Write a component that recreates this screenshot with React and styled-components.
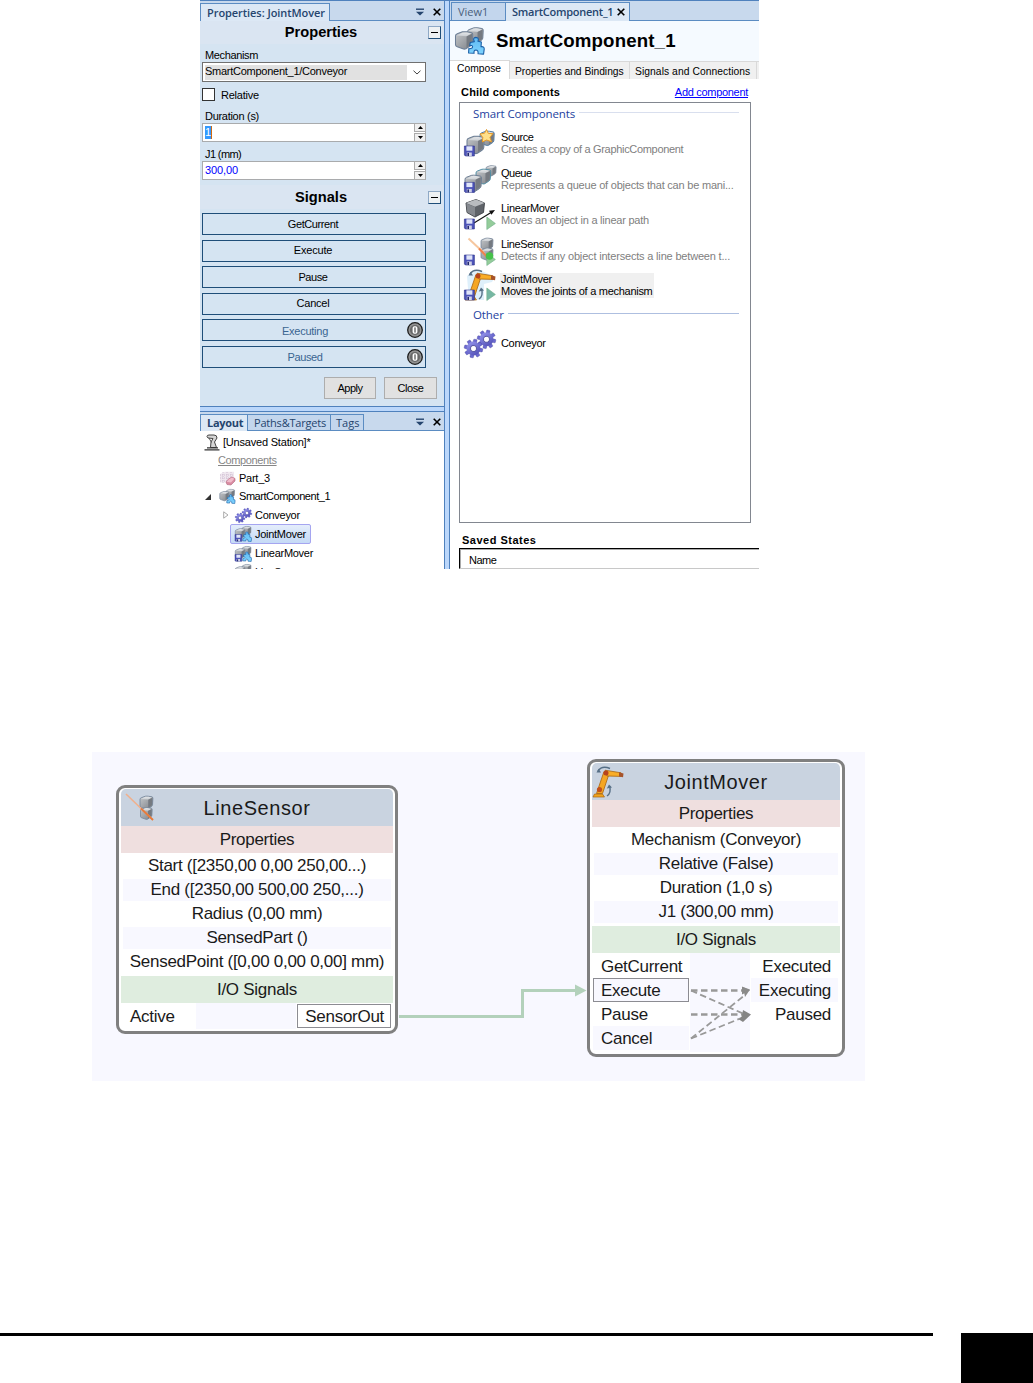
import React from "react";
import styled, { createGlobalStyle, css } from "styled-components";

const Global = createGlobalStyle`
  *, *::before, *::after { box-sizing: border-box; }
  body { margin: 0; background: #fff; }
`;

const ui = `"Liberation Sans", Arial, sans-serif`;
const segoe = `"Open Sans", "Noto Sans", sans-serif`;

const Page = styled.main`
  width: 1033px;
  height: 1383px;
  overflow: hidden;
  display: flex;
  flex-direction: column;
  background: #fff;
  font-family: ${ui};
  color: #000;
`;

const Label = styled.span`
  font-family: ${(p) => (p.$segoe ? segoe : ui)};
  font-size: ${(p) => p.$size || 11}px;
  font-weight: ${(p) => p.$weight || 400};
  letter-spacing: ${(p) => (p.$ls === undefined ? -0.3 : p.$ls)}px;
  color: ${(p) => p.$color || "#000"};
  text-decoration: ${(p) => (p.$underline ? "underline" : "none")};
  white-space: pre;
  line-height: 13px;
  display: block;
`;

/* ---------- application window ---------- */

const AppWindow = styled.section`
  width: 559px;
  height: 569px;
  margin-left: 200px;
  flex: none;
  display: flex;
  overflow: hidden;
  border-top: 1px solid #4f81bd;
  background: #bbd7fb;
`;

const LeftColumn = styled.div`
  width: 245px;
  flex: none;
  display: flex;
  flex-direction: column;
  gap: 4px;
  border-right: 1px solid #4f81bd;
`;

const Pane = styled.div`
  height: ${(p) => p.$height}px;
  flex: none;
  overflow: hidden;
  display: flex;
  flex-direction: column;
  background: ${(p) => p.$bg};
  ${(p) => p.$top && css`border-top: 1px solid #4f81bd;`}
  ${(p) => p.$bottom && css`border-bottom: 1px solid #4f81bd;`}
`;

const TabBar = styled.div`
  height: ${(p) => p.$height}px;
  flex: none;
  display: flex;
  padding-top: ${(p) => p.$pad}px;
  padding-left: ${(p) => p.$left || 0}px;
  background: #c8d9ed;
  border-bottom: 1px solid #5b8cc2;
`;

const DockTab = styled.div`
  width: ${(p) => p.$width}px;
  flex: none;
  display: flex;
  align-items: center;
  gap: 4px;
  padding-left: ${(p) => p.$pad}px;
  border: 1px solid #5b8cc2;
  border-bottom: 0;
  margin-left: ${(p) => (p.$first ? 0 : -1)}px;
  background: ${(p) => (p.$active ? "#dce8f5" : "#c3d6ed")};
  ${(p) => p.$active && css`margin-bottom: -1px; padding-bottom: 1px;`}
`;

const BarTools = styled.div`
  margin-left: auto;
  display: flex;
  align-items: center;
  gap: 9px;
  padding-right: 3px;
`;

const SectionHead = styled.div`
  height: ${(p) => p.$height}px;
  flex: none;
  display: grid;
  grid-template-columns: 228px 13px;
  align-items: center;
  background: #dae5f2;
  & > span { text-align: center; padding-left: 14px; }
`;

const MinusBox = styled.button`
  width: 13px;
  height: 13px;
  padding: 0;
  display: grid;
  place-items: center;
  border: 1px solid #1f4e79;
  border-left-color: #8fa9c6;
  border-top-color: #8fa9c6;
  background: #eef1f3;
  &::after { content: ""; width: 7px; height: 1px; background: #000; }
`;

const Form = styled.div`
  height: ${(p) => p.$height}px;
  flex: none;
  display: flex;
  flex-direction: column;
  padding-left: 2px;
`;

const FieldLabel = styled.div`
  height: ${(p) => p.$height}px;
  flex: none;
  display: flex;
  align-items: flex-end;
  padding: 0 0 ${(p) => p.$pad || 0}px 3px;
`;

const Combo = styled.div`
  width: 224px;
  height: 20px;
  flex: none;
  display: flex;
  align-items: center;
  justify-content: space-between;
  padding: 2px 4px 2px 2px;
  border: 1px solid #707070;
  background: #fff;
`;

const ComboValue = styled.div`
  width: 202px;
  height: 15px;
  background: #e1e1e1;
`;

const CheckRow = styled.div`
  display: flex;
  align-items: center;
  gap: 6px;
  margin-top: 6px;
  height: 13px;
  flex: none;
  & > span { padding-top: 1px; }
`;

const CheckBox = styled.div`
  width: 13px;
  height: 13px;
  background: #fff;
  border: 1px solid #333;
`;

const NumberBox = styled.div`
  width: 224px;
  height: 19px;
  flex: none;
  display: flex;
  align-items: center;
  justify-content: space-between;
  padding-left: 2px;
  border: 1px solid #a9abad;
  background: #fff;
`;

const Selected = styled.div`
  height: 13px;
  width: 7px;
  display: flex;
  background: #3399ff;
  border-right: 1px solid #d06a10;
`;

const Spinner = styled.div`
  width: 12px;
  height: 19px;
  margin: -1px -1px -1px 0;
  display: grid;
  grid-template-rows: 9px 9px;
  gap: 1px;
`;

const SpinBtn = styled.div`
  border: 1px solid #acacac;
  background: #f0f0f0;
  display: grid;
  place-items: center;
`;

const SignalList = styled.div`
  display: grid;
  grid-template-rows: 22px 22px 22px 22px 22px 22px;
  row-gap: 4.6px;
  width: 226px;
  margin-top: 4px;
  padding-left: 2px;
  height: 160px;
  flex: none;
`;

const SignalButton = styled.div`
  display: grid;
  grid-template-columns: 1fr ${(p) => (p.$lamp ? "18px" : "0px")};
  align-items: center;
  border: 1px solid #1f4e79;
  background: #d5e4f2;
  & > span {
    text-align: center;
    padding-right: ${(p) => (p.$lamp ? 0 : 2)}px;
    padding-top: ${(p) => (p.$lamp ? 2 : 0)}px;
  }
`;

const Actions = styled.div`
  display: flex;
  justify-content: flex-end;
  gap: 8px;
  padding: 4px 7px 0 0;
`;

const PushButton = styled.button`
  width: ${(p) => p.$width}px;
  height: 22px;
  padding: 0;
  display: grid;
  place-items: center;
  border: 1px solid #adadad;
  background: #e1e1e1;
`;

const Tree = styled.div`
  display: flex;
  flex-direction: column;
  flex: 1;
  background: #fff;
`;

const TreeRow = styled.div`
  height: ${(p) => p.$height}px;
  flex: none;
  display: flex;
  align-items: center;
  padding-left: ${(p) => p.$indent}px;
  padding-top: ${(p) => p.$drop || 0}px;
  gap: 3px;
`;

const TreeItem = styled.div`
  height: 20px;
  display: flex;
  align-items: center;
  gap: 3px;
  padding: 0 4px 0 4px;
  border: 1px solid ${(p) => (p.$active ? "#a5a5f0" : "transparent")};
  border-radius: 2px;
  background: ${(p) => (p.$active ? "linear-gradient(#e4edfb, #c5daf6)" : "none")};
`;

/* ---------- editor (right side) ---------- */

const Editor = styled.div`
  flex: 1;
  min-width: 0;
  margin-left: 4px;
  display: flex;
  flex-direction: column;
  border-left: 1px solid #4f81bd;
  background: #fff;
`;

const TitleBar = styled.div`
  height: 39px;
  flex: none;
  display: flex;
  align-items: center;
  gap: 11px;
  padding-left: 5px;
  background: #f5faff;
`;

const InnerTabs = styled.div`
  height: 19px;
  flex: none;
  display: flex;
  align-items: flex-end;
  background: #f5faff;
`;

const InnerTab = styled.div`
  width: ${(p) => p.$width}px;
  height: ${(p) => (p.$active ? 19 : 18)}px;
  flex: none;
  display: flex;
  align-items: center;
  padding: ${(p) => (p.$active ? "0 0 3px 7px" : "1px 0 0 5px")};
  border: 1px solid #d9d9d9;
  border-left: 0;
  border-bottom: 0;
  background: ${(p) => (p.$active ? "#fff" : "#f0f0f0")};
`;

const ListHead = styled.div`
  height: 23px;
  flex: none;
  display: flex;
  justify-content: space-between;
  align-items: center;
  padding: 3px 11px 0 11px;
`;

const ChildList = styled.div`
  width: 292px;
  height: 421px;
  flex: none;
  margin-left: 9px;
  padding-top: 3px;
  border: 1px solid #828790;
  background: #fff;
`;

const Items = styled.div`
  padding: 5.6px 0 3px;
`;

const GroupHead = styled.div`
  display: flex;
  align-items: center;
  height: ${(p) => p.$height}px;
  margin: 0 11px 0 13px;
  gap: 4px;
  &::after { content: ""; flex: 1; height: 1px; margin-bottom: 1px; background: ${(p) => p.$line}; }
`;

const ListItem = styled.div`
  display: flex;
  align-items: center;
  height: ${(p) => p.$height || 35.5}px;
  padding-left: 4px;
  gap: 4px;
`;

const ItemText = styled.div`
  padding: 0 1px 0 1px;
  display: flex;
  flex-direction: column;
  background: ${(p) => (p.$active ? "#f0f0f0" : "none")};
  & > span { line-height: 12.3px; }
`;

const SavedTitle = styled.div`
  height: 25px;
  flex: none;
  padding: 11px 0 0 12px;
`;

const SavedTable = styled.div`
  margin-left: 9px;
  height: 21px;
  flex: none;
  padding: 5px 0 0 9px;
  border-top: 1.5px solid #000;
  border-left: 1.5px solid #000;
  border-bottom: 1px solid #c8c8c8;
  box-shadow: inset 1px 1px 0 #aaa;
`;

/* ---------- design view ---------- */

const Canvas = styled.section`
  position: relative;
  width: 773px;
  height: 329px;
  margin: 183px 0 0 92px;
  flex: none;
  background: #f8f8ff;
`;

const Wire = styled.svg`
  position: absolute;
  left: 0;
  top: 0;
`;

const Node = styled.article`
  position: absolute;
  left: ${(p) => p.$x}px;
  top: ${(p) => p.$y}px;
  width: ${(p) => p.$w}px;
  height: ${(p) => p.$h}px;
  border: 3px solid #808080;
  border-radius: 9px;
  padding: 1px 2px 2px;
  background: #fff;
  display: flex;
  flex-direction: column;
`;

const NodeHead = styled.header`
  height: 37px;
  flex: none;
  display: grid;
  grid-template-columns: 32px 1fr 32px;
  align-items: center;
  border-radius: 5px 5px 0 0;
  background: #c9d3e0;
  & > span { text-align: center; line-height: 24px; padding-top: 1px; }
`;

const NodeSection = styled.div`
  height: 27px;
  flex: none;
  display: grid;
  place-items: center;
  background: ${(p) => p.$bg};
`;

const NodeRows = styled.div`
  display: grid;
  grid-auto-rows: 24px;
  padding: 1px 2px 2px;
  & > div:nth-child(even) { background: #f8f8ff; background-clip: content-box; }
`;

const NodeRow = styled.div`
  display: grid;
  place-items: center;
  padding: 1px 0;
`;

const NodeText = styled(Label)`
  font-size: 17px;
  letter-spacing: -0.28px;
  line-height: 22px;
  color: #1a1a1a;
`;

const NodeTitle = styled(Label)`
  font-size: 20px;
  letter-spacing: 0.57px;
  color: #1a1a1a;
`;

const Ports = styled.div`
  flex: 1;
  display: grid;
  grid-template-columns: ${(p) => p.$cols};
`;

const PortColumn = styled.div`
  display: grid;
  grid-auto-rows: 24px;
  align-content: start;
  padding: 1px ${(p) => (p.$right ? 2 : 1)}px 0 1px;
  justify-items: stretch;
  background: #fff;
`;

const Port = styled.div`
  display: flex;
  justify-content: ${(p) => (p.$right ? "flex-end" : "flex-start")};
  align-items: center;
  padding: 1px ${(p) => (p.$right ? 6 : 0)}px 0 ${(p) => (p.$right ? 0 : 7)}px;
  border: 1px solid ${(p) => (p.$boxed ? "#8c8c92" : "transparent")};
  background: ${(p) => (p.$alt ? "#f8f8ff" : "#fff")};
`;

const PortMiddle = styled.div`
  background: #f8f8ff;
`;

/* ---------- page footer ---------- */

const Footer = styled.footer`
  margin-top: 252px;
  height: 50px;
  flex: none;
  display: flex;
  justify-content: space-between;
`;

const Rule = styled.div`
  width: 933px;
  height: 3px;
  background: #000;
`;

const PageBlock = styled.div`
  width: 72px;
  height: 50px;
  background: #000;
`;

/* ---------- icons ---------- */

const Icon = styled.svg`
  display: block;
  flex: none;
  overflow: visible;
`;

const Defs = styled.svg`
  position: absolute;
`;

const SensorMark = styled.div`
  padding-left: 4px;
`;

const Gradients = () => (
  <Defs width="0" height="0">
    <defs>
      <linearGradient id="steel" x1="0" y1="0" x2="1" y2="1">
        <stop offset="0" stopColor="#c4c7ca" />
        <stop offset="1" stopColor="#7d8187" />
      </linearGradient>
      <linearGradient id="steelTop" x1="0" y1="0" x2="0" y2="1">
        <stop offset="0" stopColor="#e3e6e9" />
        <stop offset="1" stopColor="#c9cdd1" />
      </linearGradient>
      <linearGradient id="puzzle" x1="0" y1="0" x2="0" y2="1">
        <stop offset="0" stopColor="#5fb9f2" />
        <stop offset="1" stopColor="#7fd4ff" />
      </linearGradient>
      <linearGradient id="gear" x1="0" y1="0" x2="1" y2="1">
        <stop offset="0" stopColor="#9a9af0" />
        <stop offset="1" stopColor="#4a48b0" />
      </linearGradient>
      <radialGradient id="lamp">
        <stop offset="0" stopColor="#777" />
        <stop offset="1" stopColor="#999" />
      </radialGradient>
    </defs>
  </Defs>
);

const Block = ({ x, y, s = 1, edge = "#6d7f96" }) => (
  <g transform={`translate(${x} ${y}) scale(${s})`}>
    <path d="M0 4 Q0 2.5 1.5 2 L6 .3 Q8 0 10 .3 L14 1 Q15 1.3 15 2.6 L14.6 10 Q14.5 11.5 13 12.4 L9 15 Q8 15.5 7 15.2 L1.5 13.2 Q0 12.7 0 11.5Z" fill="url(#steel)" stroke={edge} strokeWidth=".9" />
    <path d="M.8 3.4 L6 1 Q8 .6 10 .9 L14 1.8 L9.6 4.2 Z" fill="url(#steelTop)" />
    <path d="M9.6 4.4 L14.4 2 L14 10.6 L9.6 14Z" fill="#757a81" />
  </g>
);

const Puzzle = ({ x, y, s = 1 }) => (
  <g transform={`translate(${x} ${y}) scale(${s})`}>
    <path d="M2.5 5 L6.2 4.2 Q4.4 .6 7.6 .3 Q10.8 .5 9.5 3.8 L12.6 4.6 L12.3 8.8 Q15.4 8.4 15.2 11 L14.6 15.6 L9.6 15.2 Q10 11.8 7.6 11.8 Q5.4 12 6 14.8 L1 14.6 L1.2 10.6 Q4.6 10.8 4.6 8.8 Q4.2 7.2 2 8Z" fill="url(#puzzle)" stroke="#1b5fa6" strokeWidth="1" strokeLinejoin="round" />
  </g>
);

const Disk = ({ x, y, s = 1 }) => (
  <g transform={`translate(${x} ${y}) scale(${s})`}>
    <path d="M0 0H10V10H1L0 9Z" fill="#4c53b8" stroke="#2a2f86" strokeWidth=".6" />
    <rect x="2" y=".3" width="6" height="4.4" fill="#dfe4f8" />
    <rect x="2.4" y="6.5" width="5" height="3.5" fill="#cfd2e6" />
    <rect x="3" y="7" width="1.6" height="3" fill="#23286f" />
  </g>
);

const Gear = ({ x, y, r }) => (
  <g transform={`translate(${x} ${y}) rotate(12)`}>
    {[0, 45, 90, 135].map((a) => (
      <rect key={a} x={-r * 0.19} y={-r} width={r * 0.38} height={r * 2} rx={r * 0.08} fill="#6b69d0" stroke="#37368c" strokeWidth=".3" transform={`rotate(${a})`} />
    ))}
    <circle r={r * 0.74} fill="url(#gear)" />
    <circle r={r * 0.33} fill="#fff" stroke="#37368c" strokeWidth=".7" />
  </g>
);

const Gears = ({ w = 32, h = 28 }) => (
  <Icon width={w} height={h} viewBox="0 0 32 28">
    <Gear x={22.5} y={9.3} r={9.3} />
    <Gear x={9.5} y={18.5} r={9.3} />
  </Icon>
);

const Robot = ({ x = 0, y = 0, s = 1 }) => (
  <g transform={`translate(${x} ${y}) scale(${s})`}>
    <path d="M6 5 Q10 -1 18 2.5" fill="none" stroke="#566f86" strokeWidth="1.4" />
    <path d="M9 6.5 L4.5 6.5 L6.6 2.8Z" fill="#566f86" />
    <path d="M1 31 L2.5 28 L10.5 28 L12.5 31Z" fill="#f2a51e" stroke="#a86410" strokeWidth=".7" />
    <path d="M4.5 27.5 L12 5.5 L17 8 L10.5 27.5Z" fill="#f5a623" stroke="#a86410" strokeWidth=".8" />
    <path d="M13 4.2 L29 6.8 L29 10.4 L15 10Z" fill="#f9ad27" stroke="#a86410" strokeWidth=".8" />
    <circle cx="14" cy="7" r="2.5" fill="#b8441c" />
    <circle cx="7.5" cy="23.5" r="2.6" fill="#c2501c" />
    <path d="M27 6.3 L31.5 7.5 L31 11.2 L27 10.6Z" fill="#a6532a" />
    <path d="M15 30 Q19.5 27 17.6 20" fill="none" stroke="#566f86" strokeWidth="1.4" />
    <path d="M14.8 22.5 L17 18.4 L20 21.6Z" fill="#566f86" />
  </g>
);

const Play = ({ color = "#94cc9a" }) => (
  <path d="M22.8 19 L31.4 25.5 L22.8 31.5Z" fill={color} stroke="#6fae88" strokeWidth=".6" />
);

const SmartIcon = ({ w, h, disk }) => (
  <Icon width={w} height={h} viewBox="0 0 30 28">
    <Block x={12.5} y={0.5} s={1.05} />
    <Block x={0.5} y={4.5} s={1.15} />
    <Puzzle x={12.5} y={10} s={1.1} />
    {disk && <Disk x={0} y={15} s={1.2} />}
  </Icon>
);

const SourceIcon = () => (
  <Icon width="32" height="28" viewBox="0 0 32 28">
    <Block x={16} y={2} s={0.95} edge="#3c6f9e" />
    <Block x={3} y={7} s={1.15} />
    <path d="M22.5 .5 L24.3 4.4 L28.8 4.6 L26 8.4 L27.5 12.8 L22.6 11 L18.4 13 L18.8 8.4 L16 5 L20.6 4.2Z" fill="#ffe08a" stroke="#e59a2b" strokeWidth="1" />
    <Disk x={0.4} y={17} />
  </Icon>
);

const QueueIcon = () => (
  <Icon width="32" height="28" viewBox="0 0 32 28">
    <Block x={22} y={0.5} s={0.68} />
    <Block x={12} y={4} s={0.98} edge="#438aa3" />
    <Block x={1} y={10} s={1.1} />
    <Disk x={0.4} y={17.4} />
  </Icon>
);

const LinearIcon = () => (
  <Icon width="32" height="32" viewBox="0 0 32 32">
    <path d="M2 5 L12 1.5 L20.5 5 L19.5 14.5 L11 19 L3 14.5Z" fill="#5f6369" stroke="#3c3f44" strokeWidth=".9" />
    <path d="M2 5 L12 1.5 L20.5 5 L11 8.8Z" fill="#b9bcc0" />
    <path d="M2.4 5.4 L11 9 V18.5 L3.3 14.3Z" fill="#85898f" />
    <path d="M10 25 L27 14.5" stroke="#111" strokeWidth="1.1" />
    <path d="M25 12.8 L31 12 L27.4 16.8Z" fill="#111" />
    <Disk x={0.4} y={21} />
    <Play />
  </Icon>
);

const SensorIcon = () => (
  <Icon width="32" height="32" viewBox="0 0 32 32">
    <Block x={17} y={4} s={0.8} />
    <Block x={17} y={14} s={0.8} />
    <path d="M4.5 4.5 L20 19" stroke="#f6c79f" strokeWidth="2" />
    <path d="M15 14.5 L25 25" stroke="#f0824a" strokeWidth="2" />
    <Play />
    <circle cx="25.5" cy="22" r="3.8" fill="#46c14a" />
    <Disk x={0.4} y={21} />
  </Icon>
);

const JointIcon = () => (
  <Icon width="32" height="32" viewBox="0 0 32 32">
    <path d="M3 7 Q10 0 18 2 L31 8 L28 13 L20 15 L20 31 H8 L4 20Z" fill="#dff0fb" />
    <Robot />
    <Disk x={0.4} y={21} />
    <Play color="#76b7a4" />
  </Icon>
);

const StationIcon = () => (
  <Icon width="16" height="17" viewBox="0 0 16 17">
    <path d="M3 2.5 Q3 1 5 1 H10 Q13 1 13 4 L10.5 8 L12.5 13.5 H6.5 L7 8 L9 4.5 L4 4Z" fill="#d5d5d5" stroke="#444" strokeWidth="1" />
    <path d="M5 4 L7.5 8.5" stroke="#555" strokeWidth="1" />
    <path d="M3 13.8H14 M.5 15.8H15.5" stroke="#333" strokeWidth="1.2" />
  </Icon>
);

const PartIcon = () => (
  <Icon width="17" height="15" viewBox="0 0 17 15">
    <path d="M1 3 L6 .8 H15 V8 L10 11.5 H1Z" fill="#efe7ef" />
    <path d="M1 4H15 M1 7H15 M1 10H12 M4 1V12 M8 1V12 M12 1V10" stroke="#c8b5cc" strokeWidth=".8" strokeDasharray="1 1" />
    <path d="M7 11 L9.5 8 L13 6 L16 7.5 V10 L12 14 L8 13.5Z" fill="#d98ba1" stroke="#b06880" strokeWidth=".6" />
    <path d="M7.5 10.8 L10 8.2 L13 6.6 L15.4 7.8 L12 11.4Z" fill="#f1bccb" />
  </Icon>
);

const SensorMini = () => (
  <Icon width="30" height="30" viewBox="0 0 30 30">
    <Block x={15} y={3} s={0.86} />
    <Block x={15.5} y={14.5} s={0.78} />
    <path d="M1 1 L28 27" stroke="#f0b08c" strokeWidth="1.6" />
    <path d="M16 15.5 L28 27" stroke="#e67b3c" strokeWidth="1.8" />
  </Icon>
);

const Pin = () => (
  <Icon width="8" height="8" viewBox="0 0 8 8">
    <path d="M0 1.2H8" stroke="#25456e" strokeWidth="1.4" />
    <path d="M0 3.8H8L4 7.6Z" fill="#25456e" />
  </Icon>
);

const Cross = () => (
  <Icon width="8" height="8" viewBox="0 0 8 8">
    <path d="M.7 .7L7.3 7.3M7.3 .7L.7 7.3" stroke="#000" strokeWidth="1.6" />
  </Icon>
);

const Lamp = () => (
  <Icon width="16" height="16" viewBox="0 0 16 16">
    <circle cx="8" cy="8" r="7.3" fill="url(#lamp)" stroke="#1c1c1c" strokeWidth="1.3" />
    <circle cx="8" cy="8" r="5" fill="#686868" />
    <rect x="5.6" y="4.2" width="4.8" height="7.6" rx="1.8" fill="#fff" />
    <rect x="7.3" y="5.4" width="1.4" height="5.2" fill="#666" />
  </Icon>
);

const Arrow = ({ down }) => (
  <Icon width="5" height="3" viewBox="0 0 5 3">
    <path d={down ? "M0 0H5L2.5 3Z" : "M0 3H5L2.5 0Z"} fill="#000" />
  </Icon>
);

const Spin = () => (
  <Spinner>
    <SpinBtn><Arrow /></SpinBtn>
    <SpinBtn><Arrow down /></SpinBtn>
  </Spinner>
);

const signals = [
  { name: "GetCurrent", ls: -0.4 },
  { name: "Execute", ls: -0.18 },
  { name: "Pause", ls: -0.4 },
  { name: "Cancel", ls: -0.2 },
  { name: "Executing", ls: -0.25, lamp: true },
  { name: "Paused", ls: -0.37, lamp: true },
];

const children = [
  { name: "Source", ls: -0.38, text: "Creates a copy of a GraphicComponent", tls: -0.32, icon: <SourceIcon /> },
  { name: "Queue", ls: -0.5, text: "Represents a queue of objects that can be mani...", tls: -0.21, icon: <QueueIcon /> },
  { name: "LinearMover", ls: -0.28, text: "Moves an object in a linear path", tls: -0.23, icon: <LinearIcon /> },
  { name: "LineSensor", ls: -0.36, text: "Detects if any object intersects a line between t...", tls: -0.18, icon: <SensorIcon /> },
  { name: "JointMover", ls: -0.28, text: "Moves the joints of a mechanism", tls: -0.28, icon: <JointIcon />, active: true },
];

const PropertiesPane = () => (
  <Pane $height={406} $bg="#d5e4f2" $bottom>
    <TabBar $height={20} $pad={2}>
      <DockTab $first $active $width={130} $pad={6}>
        <Label $segoe $weight={600} $ls={-0.06} $color="#25456e">Properties: JointMover</Label>
      </DockTab>
      <BarTools><Pin /><Cross /></BarTools>
    </TabBar>
    <SectionHead $height={23}>
      <Label $size={14.67} $weight={700} $ls={0}>Properties</Label>
      <MinusBox />
    </SectionHead>
    <Form $height={141}>
      <FieldLabel $height={18}><Label $ls={-0.36}>Mechanism</Label></FieldLabel>
      <Combo>
        <ComboValue><Label $ls={-0.26}>SmartComponent_1/Conveyor</Label></ComboValue>
        <Icon width="8" height="5" viewBox="0 0 8 5"><path d="M.5 .7L4 4L7.5 .7" fill="none" stroke="#444" /></Icon>
      </Combo>
      <CheckRow><CheckBox /><Label $ls={-0.22}>Relative</Label></CheckRow>
      <FieldLabel $height={22}><Label $ls={-0.29}>Duration (s)</Label></FieldLabel>
      <NumberBox>
        <Selected><Label $color="#fff">1</Label></Selected>
        <Spin />
      </NumberBox>
      <FieldLabel $height={19}><Label $ls={-0.6}>J1 (mm)</Label></FieldLabel>
      <NumberBox>
        <Label $color="#0000ff" $ls={-0.1}>300,00</Label>
        <Spin />
      </NumberBox>
    </Form>
    <SectionHead $height={24}>
      <Label $size={14.67} $weight={700} $ls={0}>Signals</Label>
      <MinusBox />
    </SectionHead>
    <SignalList>
      {signals.map((s) => (
        <SignalButton key={s.name} $lamp={s.lamp}>
          <Label $ls={s.ls} $color={s.lamp ? "#3a6591" : "#000"}>{s.name}</Label>
          {s.lamp && <Lamp />}
        </SignalButton>
      ))}
    </SignalList>
    <Actions>
      <PushButton $width={52}><Label $ls={-0.5}>Apply</Label></PushButton>
      <PushButton $width={53}><Label $ls={-0.4}>Close</Label></PushButton>
    </Actions>
  </Pane>
);

const LayoutPane = () => (
  <Pane $height={158} $bg="#fff" $top>
    <TabBar $height={19} $pad={2}>
      <DockTab $first $active $width={48} $pad={6}>
        <Label $segoe $weight={700} $ls={-0.3} $color="#25456e">Layout</Label>
      </DockTab>
      <DockTab $width={84} $pad={6}>
        <Label $segoe $ls={-0.2} $color="#25456e">Paths&amp;Targets</Label>
      </DockTab>
      <DockTab $width={34} $pad={5}>
        <Label $segoe $ls={0} $color="#25456e">Tags</Label>
      </DockTab>
      <BarTools><Pin /><Cross /></BarTools>
    </TabBar>
    <Tree>
      <TreeRow $height={22} $indent={4} $drop={1}>
        <StationIcon />
        <Label $ls={-0.2}>[Unsaved Station]*</Label>
      </TreeRow>
      <TreeRow $height={15} $indent={18}>
        <Label $ls={-0.38} $color="#868686" $underline>Components</Label>
      </TreeRow>
      <TreeRow $height={19} $indent={19} $drop={1}>
        <PartIcon />
        <Label $ls={-0.25}>Part_3</Label>
      </TreeRow>
      <TreeRow $height={19} $indent={5}>
        <Icon width="6" height="6" viewBox="0 0 6 6"><path d="M6 0V6H0Z" fill="#333" /></Icon>
        <Icon width="2" height="1" />
        <SmartIcon w={17} h={15} />
        <Label $ls={-0.46}>SmartComponent_1</Label>
      </TreeRow>
      <TreeRow $height={18} $indent={23}>
        <Icon width="6" height="8" viewBox="0 0 6 8"><path d="M.7 .8L5 4L.7 7.2Z" fill="#fff" stroke="#aaa" /></Icon>
        <Icon width="0" height="1" />
        <Gears w={17} h={15} />
        <Label $ls={-0.28}>Conveyor</Label>
      </TreeRow>
      <TreeRow $height={20} $indent={30}>
        <TreeItem $active>
          <SmartIcon w={17} h={16} disk />
          <Label $ls={-0.28}>JointMover</Label>
        </TreeItem>
      </TreeRow>
      <TreeRow $height={19} $indent={30}>
        <TreeItem>
          <SmartIcon w={17} h={16} disk />
          <Label $ls={-0.28}>LinearMover</Label>
        </TreeItem>
      </TreeRow>
      <TreeRow $height={18} $indent={30}>
        <TreeItem>
          <SmartIcon w={17} h={16} disk />
          <Label $ls={-0.36}>LineSensor</Label>
        </TreeItem>
      </TreeRow>
    </Tree>
  </Pane>
);

const EditorPane = () => (
  <Editor>
    <TabBar $height={20} $pad={1} $left={1}>
      <DockTab $first $width={55} $pad={6}>
        <Label $segoe $ls={0} $color="#4a5f7c">View1</Label>
      </DockTab>
      <DockTab $active $width={125} $pad={6}>
        <Label $segoe $weight={600} $ls={-0.25} $color="#25456e">SmartComponent_1</Label>
        <Cross />
      </DockTab>
    </TabBar>
    <TitleBar>
      <SmartIcon w={30} h={28} />
      <Label $size={18.67} $weight={700} $ls={0.15}>SmartComponent_1</Label>
    </TitleBar>
    <InnerTabs>
      <InnerTab $active $width={60}><Label $size={10.3} $ls={0}>Compose</Label></InnerTab>
      <InnerTab $width={120}><Label $size={10.3} $ls={-0.03}>Properties and Bindings</Label></InnerTab>
      <InnerTab $width={127}><Label $size={10.3} $ls={0.06}>Signals and Connections</Label></InnerTab>
      <InnerTab $width={10} />
    </InnerTabs>
    <ListHead>
      <Label $weight={700} $ls={0.2}>Child components</Label>
      <Label $color="#0000ff" $underline>Add component</Label>
    </ListHead>
    <ChildList>
      <GroupHead $height={14} $line="#d9dfee">
        <Label $segoe $size={11.5} $ls={-0.12} $color="#1e3f9e">Smart Components</Label>
      </GroupHead>
      <Items>
        {children.map((c) => (
          <ListItem key={c.name}>
            {c.icon}
            <ItemText $active={c.active}>
              <Label $ls={c.ls}>{c.name}</Label>
              <Label $ls={c.tls} $color={c.active ? "#000" : "#808080"}>{c.text}</Label>
            </ItemText>
          </ListItem>
        ))}
      </Items>
      <GroupHead $height={16} $line="#aebfe0">
        <Label $segoe $size={11.5} $ls={-0.1} $color="#1e3f9e">Other</Label>
      </GroupHead>
      <ListItem $height={43}>
        <Gears />
        <ItemText><Label $ls={-0.32}>Conveyor</Label></ItemText>
      </ListItem>
    </ChildList>
    <SavedTitle><Label $weight={700} $ls={0.5}>Saved States</Label></SavedTitle>
    <SavedTable><Label $ls={-0.5}>Name</Label></SavedTable>
  </Editor>
);

const DesignView = () => (
  <Canvas>
    <Node $x={24} $y={33} $w={282} $h={249}>
      <NodeHead>
        <SensorMark><SensorMini /></SensorMark>
        <NodeTitle $ls={0.57}>LineSensor</NodeTitle>
      </NodeHead>
      <NodeSection $bg="#efdfdf"><NodeText>Properties</NodeText></NodeSection>
      <NodeRows>
        {[
          "Start ([2350,00 0,00 250,00...)",
          "End ([2350,00 500,00 250,...)",
          "Radius (0,00 mm)",
          "SensedPart ()",
          "SensedPoint ([0,00 0,00 0,00] mm)",
        ].map((t) => <NodeRow key={t}><NodeText>{t}</NodeText></NodeRow>)}
      </NodeRows>
      <NodeSection $bg="#dfeddf"><NodeText>I/O Signals</NodeText></NodeSection>
      <Ports $cols="75px 1fr 97px">
        <PortColumn><Port><NodeText>Active</NodeText></Port></PortColumn>
        <PortMiddle />
        <PortColumn $right><Port $right $boxed><NodeText>SensorOut</NodeText></Port></PortColumn>
      </Ports>
    </Node>
    <Node $x={495} $y={7} $w={258} $h={298}>
      <NodeHead>
        <Icon width="32" height="32" viewBox="0 0 32 32"><Robot /></Icon>
        <NodeTitle $ls={0.57}>JointMover</NodeTitle>
      </NodeHead>
      <NodeSection $bg="#efdfdf"><NodeText>Properties</NodeText></NodeSection>
      <NodeRows>
        {["Mechanism (Conveyor)", "Relative (False)", "Duration (1,0 s)", "J1 (300,00 mm)"].map((t) => (
          <NodeRow key={t}><NodeText>{t}</NodeText></NodeRow>
        ))}
      </NodeRows>
      <NodeSection $bg="#dfeddf"><NodeText>I/O Signals</NodeText></NodeSection>
      <Ports $cols="98px 60px 1fr">
        <PortColumn>
          <Port><NodeText>GetCurrent</NodeText></Port>
          <Port $boxed $alt><NodeText>Execute</NodeText></Port>
          <Port><NodeText>Pause</NodeText></Port>
          <Port $alt><NodeText>Cancel</NodeText></Port>
        </PortColumn>
        <PortMiddle />
        <PortColumn $right>
          <Port $right><NodeText>Executed</NodeText></Port>
          <Port $right $alt><NodeText>Executing</NodeText></Port>
          <Port $right><NodeText>Paused</NodeText></Port>
        </PortColumn>
      </Ports>
    </Node>
    <Wire width="773" height="329" viewBox="0 0 773 329">
      <path d="M307 264.5H430.5V238.5H484" fill="none" stroke="#b3d1bb" strokeWidth="3" />
      <path d="M483 232.5L494.5 238.5L483 244.5Z" fill="#b3d1bb" />
      <g stroke="#999" strokeWidth="1.8" strokeDasharray="6.5 3.5" fill="none">
        <path d="M599 238.5H651" strokeWidth="2.3" />
        <path d="M599 238.5L652 262" />
        <path d="M599 262.5H651" strokeWidth="2.3" />
        <path d="M599 286.5L653 243" />
        <path d="M599 286.5L652 265" />
      </g>
      <path d="M650 234.5L658 238.5L650 242.5Z" fill="#8a8a8a" />
      <path d="M651 235L658 237.5L653 245Z" fill="#8a8a8a" />
      <path d="M651 258L659 262.5L651 270L647 267.5L650 264Z" fill="#858585" />
    </Wire>
  </Canvas>
);

export default function App() {
  return (
    <Page>
      <Global />
      <Gradients />
      <AppWindow>
        <LeftColumn>
          <PropertiesPane />
          <LayoutPane />
        </LeftColumn>
        <EditorPane />
      </AppWindow>
      <DesignView />
      <Footer>
        <Rule />
        <PageBlock />
      </Footer>
    </Page>
  );
}
